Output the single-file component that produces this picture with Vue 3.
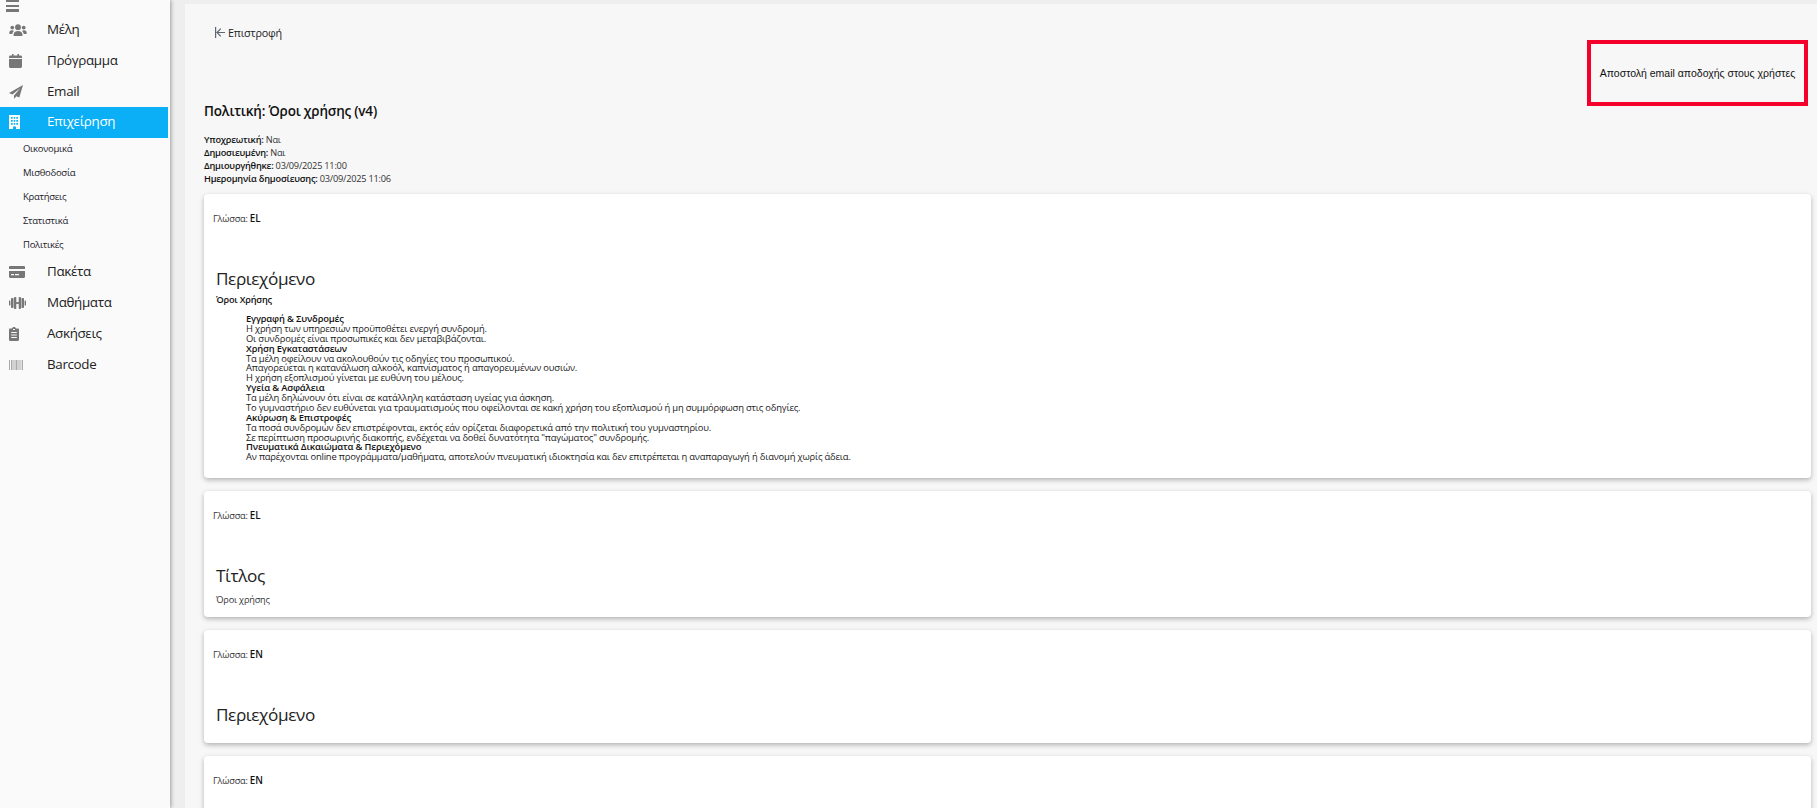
<script setup>
const navTop = [
  { label: 'Μέλη', icon: 'users' },
  { label: 'Πρόγραμμα', icon: 'calendar' },
  { label: 'Email', icon: 'plane' },
  { label: 'Επιχείρηση', icon: 'building', active: true },
]
const subs = ['Οικονομικά', 'Μισθοδοσία', 'Κρατήσεις', 'Στατιστικά', 'Πολιτικές']
const navBottom = [
  { label: 'Πακέτα', icon: 'card' },
  { label: 'Μαθήματα', icon: 'dumbbell' },
  { label: 'Ασκήσεις', icon: 'clipboard' },
  { label: 'Barcode', icon: 'barcode' },
]
const meta = [
  ['Υποχρεωτική:', 'Ναι'],
  ['Δημοσιευμένη:', 'Ναι'],
  ['Δημιουργήθηκε:', '03/09/2025 11:00'],
  ['Ημερομηνία δημοσίευσης:', '03/09/2025 11:06'],
]
const terms = [
  ['Εγγραφή & Συνδρομές', 'Η χρήση των υπηρεσιών προϋποθέτει ενεργή συνδρομή.', 'Οι συνδρομές είναι προσωπικές και δεν μεταβιβάζονται.'],
  ['Χρήση Εγκαταστάσεων', 'Τα μέλη οφείλουν να ακολουθούν τις οδηγίες του προσωπικού.', 'Απαγορεύεται η κατανάλωση αλκοόλ, καπνίσματος ή απαγορευμένων ουσιών.', 'Η χρήση εξοπλισμού γίνεται με ευθύνη του μέλους.'],
  ['Υγεία & Ασφάλεια', 'Τα μέλη δηλώνουν ότι είναι σε κατάλληλη κατάσταση υγείας για άσκηση.', 'Το γυμναστήριο δεν ευθύνεται για τραυματισμούς που οφείλονται σε κακή χρήση του εξοπλισμού ή μη συμμόρφωση στις οδηγίες.'],
  ['Ακύρωση & Επιστροφές', 'Τα ποσά συνδρομών δεν επιστρέφονται, εκτός εάν ορίζεται διαφορετικά από την πολιτική του γυμναστηρίου.', 'Σε περίπτωση προσωρινής διακοπής, ενδέχεται να δοθεί δυνατότητα "παγώματος" συνδρομής.'],
  ['Πνευματικά Δικαιώματα & Περιεχόμενο', 'Αν παρέχονται online προγράμματα/μαθήματα, αποτελούν πνευματική ιδιοκτησία και δεν επιτρέπεται η αναπαραγωγή ή διανομή χωρίς άδεια.'],
]
</script>

<template>
  <div class="page">
    <aside class="sidebar">
      <div class="burger"><span></span><span></span><span></span></div>
      <nav class="nav">
        <a v-for="item in navTop" :key="item.label" class="nav-item" :class="{ active: item.active }">
          <span class="nav-icon">
            <svg v-if="item.icon === 'users'" width="18" height="14" viewBox="0 0 18 14"><circle cx="9" cy="4.2" r="2.9"/><circle cx="3.3" cy="4.6" r="1.9"/><circle cx="14.7" cy="4.6" r="1.9"/><path d="M4.6 13v-1.6C4.6 9.2 6.4 7.9 9 7.9s4.4 1.3 4.4 3.5V13z"/><path d="M0.2 10.6c0-2.2 1-3.3 2.8-3.3.8 0 1.4.2 1.9.6-1 .8-1.5 1.9-1.6 3.2H1z"/><path d="M17.8 10.6c0-2.2-1-3.3-2.8-3.3-.8 0-1.4.2-1.9.6 1 .8 1.5 1.9 1.6 3.2H17z"/></svg>
            <svg v-else-if="item.icon === 'calendar'" width="13" height="14" viewBox="0 0 13 14"><path d="M0 5h13v7.6c0 .8-.6 1.4-1.4 1.4H1.4C.6 14 0 13.400 0 12.600z"/><path d="M0 4V3c0-.8.6-1.400 1.400-1.400H3V0h1.600v1.600h3.800V0H10v1.600h1.600c.8 0 1.400.6 1.400 1.400v1z"/></svg>
            <svg v-else-if="item.icon === 'plane'" width="14" height="14" viewBox="0 0 14 14"><path d="M14 0 0 8l3.400 1.500L11.500 3 5 10.400V14l2.300-2.800 3 1.300z"/></svg>
            <svg v-else-if="item.icon === 'building'" width="11" height="14" viewBox="0 0 11 14"><path fill-rule="evenodd" d="M0 0h11v14H7v-2.600H4V14H0zM2 2v1.800h1.700V2zm2.700 0v1.800h1.600V2zm2.600 0v1.800H9V2zM2 5v1.800h1.700V5zm2.700 0v1.800h1.600V5zm2.600 0v1.800H9V5zM2 8v1.800h1.700V8zm2.700 0v1.800h1.600V8zm2.600 0v1.800H9V8z"/></svg>
          </span>
          <span class="nav-label">{{ item.label }}</span>
        </a>
      </nav>
      <div class="subs">
        <a v-for="s in subs" :key="s" class="sub-item">{{ s }}</a>
      </div>
      <nav class="nav">
        <a v-for="item in navBottom" :key="item.label" class="nav-item">
          <span class="nav-icon">
            <svg v-if="item.icon === 'card'" width="16" height="12" viewBox="0 0 16 12"><path d="M1.200 0h13.600c.7 0 1.200.5 1.200 1.200V3H0V1.200C0 .5.500 0 1.200 0z"/><path fill-rule="evenodd" d="M0 5h16v5.800c0 .7-.5 1.200-1.200 1.200H1.200C.5 12 0 11.500 0 10.800zM2 8v1.300h3V8zm4 0v1.300h4V8z"/></svg>
            <svg v-else-if="item.icon === 'dumbbell'" width="17" height="12" viewBox="0 0 17 12"><rect x="0" y="3.500" width="1.400" height="5" rx=".5"/><rect x="2" y="1" width="2.500" height="10" rx=".8"/><rect x="5" y="0" width="2.300" height="12" rx=".8"/><rect x="7" y="5.100" width="3" height="1.800"/><rect x="9.700" y="0" width="2.300" height="12" rx=".8"/><rect x="12.500" y="1" width="2.500" height="10" rx=".8"/><rect x="15.600" y="3.500" width="1.400" height="5" rx=".5"/></svg>
            <svg v-else-if="item.icon === 'clipboard'" width="10" height="14" viewBox="0 0 10 14"><path fill-rule="evenodd" d="M3 1.500C3.200.6 4 0 5 0s1.800.6 2 1.500h1.800c.7 0 1.200.5 1.200 1.200v10.100c0 .7-.5 1.200-1.200 1.200H1.200C.5 14 0 13.500 0 12.800V2.700c0-.7.5-1.200 1.200-1.200zM2.200 5v1h5.600V5zm0 2.500v1h5.600v-1zm0 2.500v1h5.600v-1zM4 2v1h2V2z"/></svg>
            <svg v-else-if="item.icon === 'barcode'" width="14" height="10" viewBox="0 0 14 10" class="bar"><rect x="0" width="1" height="10"/><rect x="2" width="1.500" height="10"/><rect x="4.500" width="1" height="10"/><rect x="6.500" width="2" height="10"/><rect x="9.500" width="1" height="10"/><rect x="11.500" width=".8" height="10"/><rect x="13" width="1" height="10"/></svg>
          </span>
          <span class="nav-label">{{ item.label }}</span>
        </a>
      </nav>
    </aside>

    <main class="main">
      <div class="panel">
        <div class="back-row">
          <a class="back">
            <svg width="10" height="11" viewBox="0 0 10 11" fill="none" stroke="#5d6670" stroke-width="1.200"><path d="M.6 0v11M10 5.500H2M5.800 1.700 2 5.500l3.800 3.800"/></svg>
            <span>Επιστροφή</span>
          </a>
        </div>
        <div class="action-row">
          <button class="accept-btn">Αποστολή email αποδοχής στους χρήστες</button>
        </div>
        <h1 class="title">Πολιτική: Όροι χρήσης (v4)</h1>
        <div class="meta">
          <div v-for="m in meta" :key="m[0]"><b>{{ m[0] }}</b> {{ m[1] }}</div>
        </div>

        <section class="card first">
          <div class="lang">Γλώσσα: <b>EL</b></div>
          <div class="card-body">
            <h2>Περιεχόμενο</h2>
            <p class="doc-title">Όροι Χρήσης</p>
            <ul class="terms">
              <li v-for="t in terms" :key="t[0]">
                <b>{{ t[0] }}</b>
                <div v-for="line in t.slice(1)" :key="line">{{ line }}</div>
              </li>
            </ul>
          </div>
        </section>

        <section class="card">
          <div class="lang">Γλώσσα: <b>EL</b></div>
          <div class="card-body">
            <h2>Τίτλος</h2>
            <p class="plain">Όροι χρήσης</p>
          </div>
        </section>

        <section class="card">
          <div class="lang">Γλώσσα: <b>EN</b></div>
          <div class="card-body">
            <h2>Περιεχόμενο</h2>
          </div>
        </section>

        <section class="card last">
          <div class="lang">Γλώσσα: <b>EN</b></div>
        </section>
      </div>
    </main>
  </div>
</template>

<style>
html, body { margin: 0; height: 100%; overflow: hidden; background: #eeeeee; }
</style>

<style scoped>
.page {
  display: flex;
  height: 808px;
  overflow: hidden;
  background: #eeeeee;
  font-family: "Open Sans", "Noto Sans", sans-serif;
  color: #111;
}
.sidebar {
  width: 170px;
  flex: none;
  background: #fafafa;
  box-shadow: 1px 0 4px rgba(0, 0, 0, 0.35);
  z-index: 2;
}
.burger {
  height: 14.6px;
  padding-left: 6px;
  box-sizing: border-box;
  display: flex;
  flex-direction: column;
  gap: 2.500px;
}
.burger span { display: block; width: 13px; height: 2.200px; background: #777; }
.nav-item {
  display: flex;
  align-items: center;
  height: 30.8px;
  width: 168px;
  font-size: 13.400px;
  letter-spacing: -0.350px;
  color: #222;
}
.nav-label { padding-bottom: 2px; }
.nav-icon {
  width: 47px;
  flex: none;
  padding-left: 9px;
  box-sizing: border-box;
  display: flex;
  align-items: center;
  color: #777;
}
.nav-icon svg { fill: currentColor; }
.nav-icon svg.bar { fill: #aaa; }
.nav-item.active { background: #0aaff5; color: #fff; }
.nav-item.active .nav-icon { color: #fff; }
.subs { display: flex; flex-direction: column; margin-bottom: -1px; }
.sub-item {
  height: 24px;
  line-height: 21px;
  padding-left: 23px;
  font-size: 9.500px;
  letter-spacing: -0.280px;
  color: #1a1a2a;
}
.main { flex: 1; min-width: 0; padding: 4px 0 0 15px; }
.panel {
  background: #f7f7f7;
  height: 100%;
  padding: 0 6px 0 19px;
  box-sizing: border-box;
}
.back-row { padding: 17px 0 0 11px; height: 30px; }
.back {
  display: inline-flex;
  align-items: center;
  gap: 3px;
  font-size: 10.800px;
  letter-spacing: -0.200px;
  color: #222;
  height: 20px;
}
.action-row { display: flex; justify-content: flex-end; padding-right: 3px; margin-top: -11px; }
.accept-btn {
  width: 221px;
  height: 66px;
  box-sizing: border-box;
  border: 4px solid #f4002a;
  background: transparent;
  padding: 0;
  font-family: "Liberation Sans", Arial, sans-serif;
  font-size: 10.500px;
  color: #111;
  text-align: center;
}
.title {
  margin: -5px 0 0;
  font-size: 13.500px;
  letter-spacing: -0.190px;
  line-height: 20px;
  font-weight: 600;
  color: #111;
}
.meta {
  margin-top: 12px;
  font-size: 9.200px;
  letter-spacing: -0.220px;
  line-height: 13px;
  color: #333;
}
.meta b { font-weight: 600; color: #111; }
.card {
  margin-top: 13px;
  background: #fff;
  border-radius: 4px;
  box-shadow: 0 2px 5px rgba(0, 0, 0, 0.28);
  padding: 18px 9px 15px;
}
.card.first { margin-top: 9px; }
.card.last { min-height: 100px; }
.lang { font-size: 9.200px; letter-spacing: -0.200px; line-height: 14px; color: #333; }
.lang b { font-size: 9.800px; font-weight: 600; color: #111; }
.card-body { padding: 40px 3px 0; }
h2 {
  margin: 0;
  font-size: 17.200px;
  letter-spacing: -0.400px;
  line-height: 26px;
  font-weight: 400;
  color: #222;
}
.doc-title { margin: 1px 0 0; font-size: 9.200px; letter-spacing: -0.200px; line-height: 14px; font-weight: 600; color: #111; }
.plain { margin: 4px 0 -5px; font-size: 9.200px; letter-spacing: -0.200px; line-height: 14px; color: #333; }
.terms {
  list-style: none;
  margin: 7px 0 1px;
  padding: 0 0 0 30px;
  font-size: 9.400px;
  letter-spacing: -0.180px;
  line-height: 9.870px;
  color: #222;
}
.terms b { font-weight: 600; color: #111; display: block; }
</style>
